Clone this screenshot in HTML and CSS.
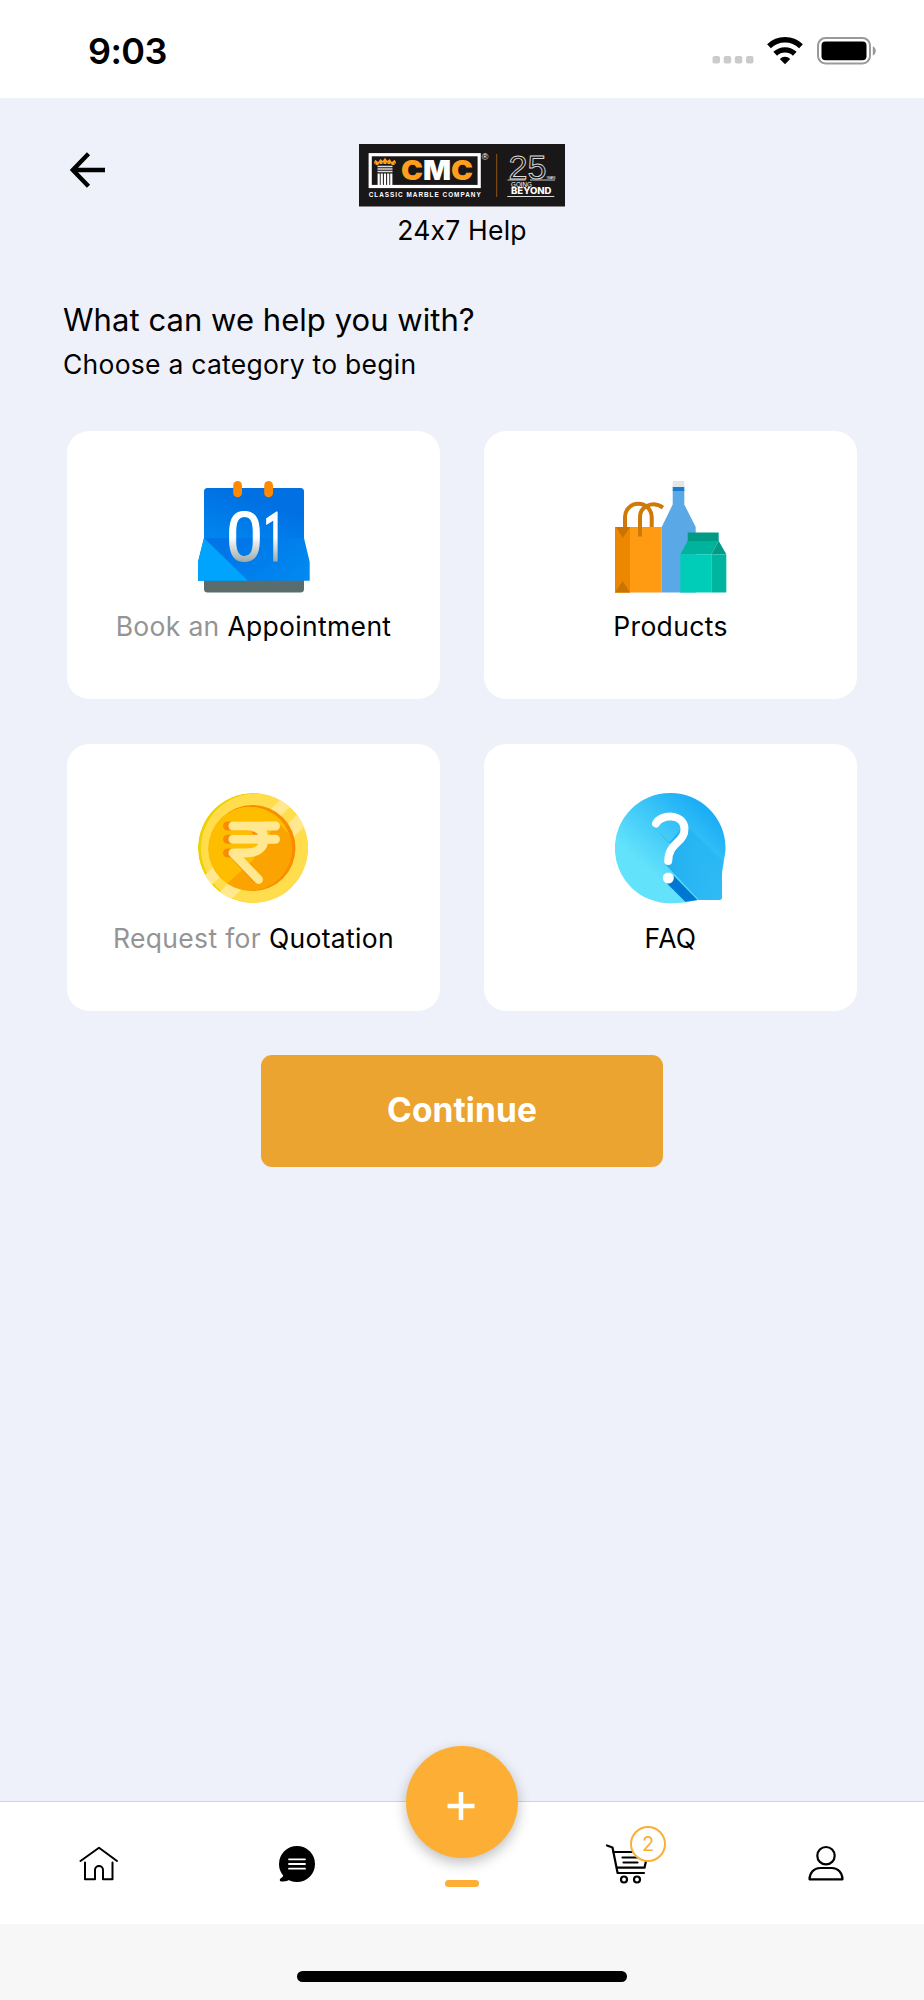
FILE: index.html
```html
<!doctype html>
<html lang="en">
  <head>
    <meta charset="UTF-8" />
    <meta name="viewport" content="width=device-width, initial-scale=1.0" />
    <title>24x7 Help</title>
    <link rel="stylesheet" href="styles.css">
  </head>
  <body>
    <div class="status-bar">
      <span class="time">9:03</span>
      <div class="status-icons">
        <svg class="signal" width="42" height="28" viewBox="0 0 42 28" fill="#cbcbcb">
          <rect x="0.5" y="19" width="7.5" height="7.5" rx="2" />
          <rect x="11.7" y="19" width="7.5" height="7.5" rx="2" />
          <rect x="22.8" y="19" width="7.5" height="7.5" rx="2" />
          <rect x="34" y="19" width="7.5" height="7.5" rx="2" />
        </svg>
        <svg class="wifi" width="36" height="28" viewBox="0 0 36 28">
          <g fill="none" stroke="#000" stroke-width="5.4">
            <path d="M2 9.3a23 23 0 0 1 32 0" />
            <path d="M8.2 16.8a14.2 14.2 0 0 1 19.6 0" />
          </g>
          <path d="M12.8 21.9a7.6 7.6 0 0 1 10.4 0L18 27.2z" />
        </svg>
        <svg class="battery" width="60" height="28" viewBox="0 0 60 28">
          <rect x="1" y="1" width="52" height="25.5" rx="7.5" fill="none" stroke="#999" stroke-width="2" />
          <rect x="4.5" y="4.5" width="45" height="18.7" rx="4" />
          <path d="M55.8 9.2c4 1.6 4 7.6 0 9.2z" fill="#999" />
        </svg>
      </div>
    </div>

    <main class="screen">
      <header class="header">
        <a class="back" href="#" aria-label="Back">
          <svg width="36" height="36" viewBox="0 0 36 36" fill="none" stroke="#000" stroke-width="4.4">
            <path d="M35 18H3M18.5 1.8L2.8 18l15.7 16.2" />
          </svg>
        </a>
        <div class="brand">
          <svg class="logo" width="206" height="63" viewBox="0 0 206 63">
            <rect width="206" height="62.5" fill="#1a1718" />
            <rect x="11.2" y="10.7" width="109" height="31.8" fill="none" stroke="#fff" stroke-width="3.2" />
            <path d="M18 21v-3M22 20v-3M26 20v-4M30 20v-3M34 21v-3" stroke="#ff9d1c" stroke-width="3" />
            <path d="M15.5 19.5l1-2.5 3 2 2-3 2.5 2 2-3 2 3 2.500-2 2 3 3-2 1 2.500" fill="none" stroke="#ff9d1c" stroke-width="1.5" />
            <path d="M18.5 22.5h15M18.5 25h15M18.5 27.5h15" stroke="#ddd" stroke-width="1.7" />
            <path d="M19.7 29.5v12M22.8 29.5v12M26 29.5v12M29.2 29.5v12M32.3 29.5v12" stroke="#fff" stroke-width="2.2" />
            <text x="42" y="36.4" class="logo-cmc" textLength="72" lengthAdjust="spacingAndGlyphs">C<tspan fill="#fff">M</tspan>C</text>
            <text x="9.7" y="53" class="logo-name" textLength="112">CLASSIC MARBLE COMPANY</text>
            <text x="122.8" y="15.7" class="logo-reg">®</text>
            <path d="M137.7 10v43" stroke="#8f5415" stroke-width="1" />
            <text x="149.5" y="35.2" class="logo-years" textLength="38" lengthAdjust="spacingAndGlyphs">25</text>
            <text x="187.5" y="34.7" class="logo-tiny" textLength="9">YEARS</text>
            <path d="M148.5 36h18M171 36h25" stroke="#ddd" stroke-width="0.9" />
            <text x="152" y="42.7" class="logo-going" textLength="21">GOING</text>
            <text x="152" y="49.8" class="logo-beyond" textLength="40.5" lengthAdjust="spacingAndGlyphs">BEYOND</text>
            <path d="M148.3 52.5h47" stroke="#ddd" stroke-width="1.2" />
          </svg>
          <span class="brand-title">24x7 Help</span>
        </div>
      </header>

      <h1 class="title">What can we help you with?</h1>
      <p class="subtitle">Choose a category to begin</p>

      <div class="cards">
        <div class="card">
          <svg width="112" height="112" viewBox="0 0 112 112">
            <defs>
              <linearGradient id="calTop" x1="0" y1="1" x2="0.5" y2="0.2">
                <stop offset="0" stop-color="#0087ef" />
                <stop offset="1" stop-color="#0070e3" />
              </linearGradient>
              <linearGradient id="calBottom" x1="0.2" y1="0.3" x2="1" y2="0.7">
                <stop offset="0" stop-color="#0075e8" />
                <stop offset="1" stop-color="#0088f0" />
              </linearGradient>
              <linearGradient id="calNum" x1="0" y1="31" x2="0" y2="81" gradientUnits="userSpaceOnUse">
                <stop offset="0.5" stop-color="#fff" />
                <stop offset="1" stop-color="#9ba9a8" />
              </linearGradient>
            </defs>
            <path d="M6 97h100v11a3.5 3.5 0 0 1-3.5 3.5H9.5A3.5 3.5 0 0 1 6 108z" fill="#5a6c6c" />
            <path d="M6 58V10.5A3.5 3.5 0 0 1 9.5 7h93a3.5 3.5 0 0 1 3.5 3.5V58z" fill="url(#calTop)" />
            <path d="M6 57h100l5.700 24v18.700H0V81z" fill="url(#calBottom)" />
            <path d="M6 57L0 81v18.700h50z" fill="#00a4fd" />
            <rect x="35.2" y="0" width="8.8" height="16.3" rx="4.4" fill="#ff8a00" />
            <rect x="66.2" y="0" width="8.8" height="16.3" rx="4.4" fill="#ff8a00" />
            <g class="cal-num" fill="url(#calNum)" stroke="url(#calNum)">
              <text x="28" y="80" textLength="37" lengthAdjust="spacingAndGlyphs">0</text>
              <text x="65.2" y="80" textLength="22" lengthAdjust="spacingAndGlyphs">1</text>
            </g>
          </svg>
          <p class="card-label"><span class="muted">Book an</span> Appointment</p>
        </div>

        <div class="card">
          <svg width="112" height="112" viewBox="0 0 112 112">
            <path d="M0 46h46.7v65.5H0z" fill="#ff9a13" />
            <path d="M0 46h15v65.5H0z" fill="#ee8700" />
            <path d="M1 46h14l-7.2 11zM0 111.5h15L7.7 100z" fill="#c97300" />
            <g fill="none" stroke="#cf7a08" stroke-width="4">
              <path d="M10 46V36a13.3 13.3 0 0 1 26.7 0v10" />
              <path d="M25 55.5V36c0-10 12-17 23-9.3" />
            </g>
            <path d="M57.7 9h11.6v14.5L80.7 46v65.5h-34V46l11-22.5z" fill="#5ba8e6" />
            <path d="M57.7 5.5h11.6V10H57.7z" fill="#1d7bcb" />
            <path d="M57.7 0h11.6v6H57.7z" fill="#e3e6e8" />
            <path d="M72.7 51.5h31V61h-31z" fill="#009a85" />
            <path d="M72.7 60h31l-7.4 13.3h-31z" fill="#00b39c" />
            <path d="M103.7 60l7.6 13.3h-15z" fill="#009a85" />
            <path d="M65.3 73.3h31v38.2h-31z" fill="#00cdb7" />
            <path d="M96.3 73.3h15v38.2h-15z" fill="#00b5a0" />
          </svg>
          <p class="card-label">Products</p>
        </div>

        <div class="card">
          <svg width="112" height="112" viewBox="0 0 112 112">
            <defs>
              <clipPath id="coinClip"><circle cx="55" cy="55" r="55" /></clipPath>
              <clipPath id="coinInner"><circle cx="52" cy="55.5" r="42" /></clipPath>
            </defs>
            <g clip-path="url(#coinClip)">
              <circle cx="55" cy="55" r="55" fill="#efd000" />
              <circle cx="58" cy="55.5" r="55" fill="#ffdd4d" />
              <path d="M89 0h16.7L0 105.7V89zM120.7 0h19L0 139.7v-19z" fill="#ffe88f" />
            </g>
            <circle cx="54.5" cy="55" r="43" fill="#f98c00" />
            <g clip-path="url(#coinInner)">
              <circle cx="52" cy="55.5" r="42" fill="#ffbd00" />
              <path d="M79 29l40 40-50 50-46-23 10-9 22-20z" fill="#fba300" />
            </g>
            <g fill="none" stroke-width="9" stroke-linecap="round" stroke-linejoin="round">
              <path d="M29.5 33h35M29.5 46.3h30M29.5 60h5l24 26" stroke="#f98b00" />
              <path d="M45 33c10 0 14 4 15 13" stroke="#f98b00" stroke-width="8" />
              <path d="M35 33h42.5M35 46.3h42.5M48 33c12 0 18 5 18 13.3C66 55 59 60 48 60H35l25.5 26.5" stroke="#ffe88f" />
              <path d="M36 39.7h18" stroke="#ffbd00" stroke-width="4.3" stroke-linecap="butt" />
            </g>
          </svg>
          <p class="card-label"><span class="muted">Request for</span> Quotation</p>
        </div>

        <div class="card">
          <svg width="112" height="112" viewBox="0 0 112 112">
            <defs>
              <linearGradient id="faqFill" x1="0.25" y1="0.65" x2="0.75" y2="0.1">
                <stop offset="0" stop-color="#62e2fb" />
                <stop offset="1" stop-color="#1caef5" />
              </linearGradient>
              <linearGradient id="faqShade" x1="0" y1="0.5" x2="1" y2="0.3">
                <stop offset="0" stop-color="#20abef" />
                <stop offset="1" stop-color="#27b7f5" stop-opacity="0.7" />
              </linearGradient>
            </defs>
            <path d="M55 0a55 55 0 0 1 55.5 55c0 10-3.5 15-3.5 27v22a3 3 0 0 1-3 3H83c-8 2-17 3.3-28 3.3A55 55 0 0 1 55 0z" fill="url(#faqFill)" />
            <path d="M39 35l15 15 16-19 39 38c-1 5-2 8-2 13v22a3 3 0 0 1-3 3H84L50 71l8-18z" fill="url(#faqShade)" />
            <path d="M50 88.5l20.3 20.3L82.5 107 59 83z" fill="#0078d3" />
            <path d="M41 30.5c5-10 28-10 28.5 5C70 50 53.500 49 53.2 68" fill="none" stroke="#fff" stroke-width="8" stroke-linecap="round" />
            <circle cx="53.3" cy="85" r="5.5" fill="#fff" />
          </svg>
          <p class="card-label">FAQ</p>
        </div>
      </div>

      <button class="continue" type="button">Continue</button>
    </main>

    <nav class="tab-bar">
      <div class="tab-group tab-group-left">
        <a class="tab" href="#" aria-label="Home">
          <svg width="40" height="40" viewBox="0 0 40 40" fill="none" stroke="#000" stroke-width="2" stroke-linecap="round" stroke-linejoin="round">
            <path d="M2.500 18L21 4.800 39 18" />
            <path d="M7 19.500V36.300h10V27a4 4 0 0 1 8 0v9.300H34.500V19.500" />
          </svg>
        </a>
        <a class="tab" href="#" aria-label="Chat">
          <svg width="40" height="40" viewBox="0 0 40 40">
            <circle cx="20" cy="21" r="18" />
            <path d="M5.5 30c2 3 0 4-2.5 6-1 2 1 2.700 3 2.500 3 0 5-1 7-2z" />
            <path d="M12 16.300h16M12 21h16M12 25.700h16" stroke="#fff" stroke-width="1.800" stroke-linecap="round" />
          </svg>
        </a>
      </div>
      <div class="tab-add">
        <button class="fab" type="button" aria-label="Add">
          <svg width="28" height="28" viewBox="0 0 28 28" stroke="#fff" stroke-width="4.5">
            <path d="M14 0v28M0.5 14h27" />
          </svg>
        </button>
        <span class="indicator"></span>
      </div>
      <div class="tab-group tab-group-right">
        <a class="tab" href="#" aria-label="Cart">
          <svg width="44" height="42" viewBox="0 0 44 42" fill="none" stroke="#000" stroke-width="2.2" stroke-linecap="round" stroke-linejoin="round">
            <path d="M2 2.500l5.500 2L12.600 30H39" />
            <path d="M8.500 9H43l-3.500 15.700H12" />
            <path d="M17.500 14.500h18M18.500 19.500h14" />
            <circle cx="19" cy="36.500" r="3" />
            <circle cx="32" cy="36.500" r="3" />
          </svg>
          <span class="badge">2</span>
        </a>
        <a class="tab" href="#" aria-label="Profile">
          <svg width="40" height="40" viewBox="0 0 40 40" fill="none" stroke="#000" stroke-width="2.2" stroke-linejoin="round">
            <circle cx="20" cy="12.7" r="8.7" />
            <path d="M3.5 36.300C3.500 30 8 25 14 25h12c6 0 10.500 5 10.500 11.300z" />
          </svg>
        </a>
      </div>
    </nav>
    <div class="home-area">
      <span class="home-indicator"></span>
    </div>
  </body>
</html>
```
FILE: styles.css
```css
* {
  box-sizing: border-box;
}
body {
  margin: 0;
  height: 2000px;
  display: flex;
  flex-direction: column;
  font-family: Inter, "Liberation Sans", sans-serif;
  color: #000;
  background: #fff;
}
h1,
p {
  margin: 0;
  font-weight: 400;
}
svg {
  display: block;
}
.status-bar {
  height: 98px;
  padding: 4px 47px 0 88px;
  display: flex;
  align-items: center;
  justify-content: space-between;
}
.time {
  font-size: 36px;
  font-weight: 600;
  letter-spacing: -0.6px;
}
.status-icons {
  display: flex;
}
.wifi {
  margin: 0 14px 0 13px;
}
.signal {
  margin-left: -1px;
}
.screen {
  flex: 1;
  padding: 46px 64px 0;
  background: #eef1f9;
}
.header {
  display: grid;
  grid-template-columns: 1fr auto 1fr;
}
.back {
  padding: 8px 0 0 6px;
}
.brand {
  display: flex;
  flex-direction: column;
  align-items: center;
  gap: 7px;
}
.brand-title {
  font-size: 26.5px;
  line-height: 32px;
  letter-spacing: 0.2px;
}
.logo text {
  font-family: "Liberation Sans", Arial, sans-serif;
  fill: #fff;
}
.logo .logo-cmc {
  font-family: Inter, sans-serif;
  font-size: 27px;
  font-weight: 900;
  fill: #ff9d1c;
}
.logo .logo-name {
  font-size: 6.4px;
  font-weight: 700;
}
.logo .logo-reg {
  font-size: 9px;
}
.logo .logo-years {
  font-size: 34px;
  fill: none;
  stroke: #ddd;
  stroke-width: 0.9;
}
.logo .logo-tiny {
  font-size: 3px;
}
.logo .logo-going {
  font-size: 6.3px;
}
.logo .logo-beyond {
  font-family: Inter, sans-serif;
  font-size: 8.6px;
  font-weight: 800;
}
.title {
  margin-top: 55px;
  margin-left: -1px;
  font-size: 31px;
  line-height: 38px;
  letter-spacing: 0.05px;
}
.subtitle {
  margin-top: 9px;
  margin-left: -1px;
  font-size: 26.5px;
  line-height: 32px;
  letter-spacing: 0.25px;
}
.cards {
  display: grid;
  grid-template-columns: 1fr 1fr;
  gap: 45px 44px;
  margin: 51px 3px 0;
}
.card {
  height: 267.5px;
  padding-top: 49.5px;
  display: flex;
  flex-direction: column;
  align-items: center;
  gap: 17px;
  background: #fff;
  border-radius: 22px;
}
.card-label {
  font-size: 26.5px;
  line-height: 32px;
  letter-spacing: 0.33px;
}
.muted {
  color: #949494;
}
.cal-num {
  font-family: Roboto, sans-serif;
  font-size: 68px;
  stroke-width: 1px;
  stroke-linejoin: round;
}
.continue {
  display: block;
  width: 402px;
  height: 112px;
  margin: 44px auto 0;
  padding: 0 0 2px;
  border: none;
  border-radius: 11px;
  background: #eba430;
  color: #fff;
  font-family: inherit;
  font-size: 33.5px;
  font-weight: 700;
  letter-spacing: 0.1px;
}
.tab-bar {
  height: 123px;
  display: grid;
  grid-template-columns: 1fr 112px 1fr;
  border-top: 1px solid #d3d4d8;
  background: #fff;
}
.tab-group {
  display: flex;
  justify-content: space-between;
}
.tab-group-left {
  padding: 0 89px 0 78px;
}
.tab-group-right {
  padding: 0 78px 0 87px;
}
.tab {
  position: relative;
  padding-top: 41px;
}
.tab-add {
  display: flex;
  flex-direction: column;
  align-items: center;
}
.fab {
  width: 112px;
  height: 112px;
  margin-top: -56px;
  padding: 7px 2px 0 0;
  display: flex;
  align-items: center;
  justify-content: center;
  flex-shrink: 0;
  border: none;
  border-radius: 50%;
  background: #fcaf34;
  box-shadow: 0 5px 13px rgba(0, 0, 0, 0.25);
}
.indicator {
  width: 34px;
  height: 7px;
  margin-top: 22px;
  border-radius: 4px;
  background: #fcaf34;
}
.badge {
  position: absolute;
  top: 24px;
  left: 25px;
  width: 36px;
  height: 36px;
  border: 2px solid #fcaf34;
  border-radius: 50%;
  background: #fff;
  color: #fcaf34;
  font-size: 20px;
  line-height: 32px;
  text-align: center;
}
.home-area {
  height: 76px;
  display: flex;
  justify-content: center;
  align-items: flex-start;
  padding-top: 47px;
  background: #f7f7f7;
}
.home-indicator {
  width: 330px;
  height: 11px;
  border-radius: 6px;
  background: #000;
}
```
